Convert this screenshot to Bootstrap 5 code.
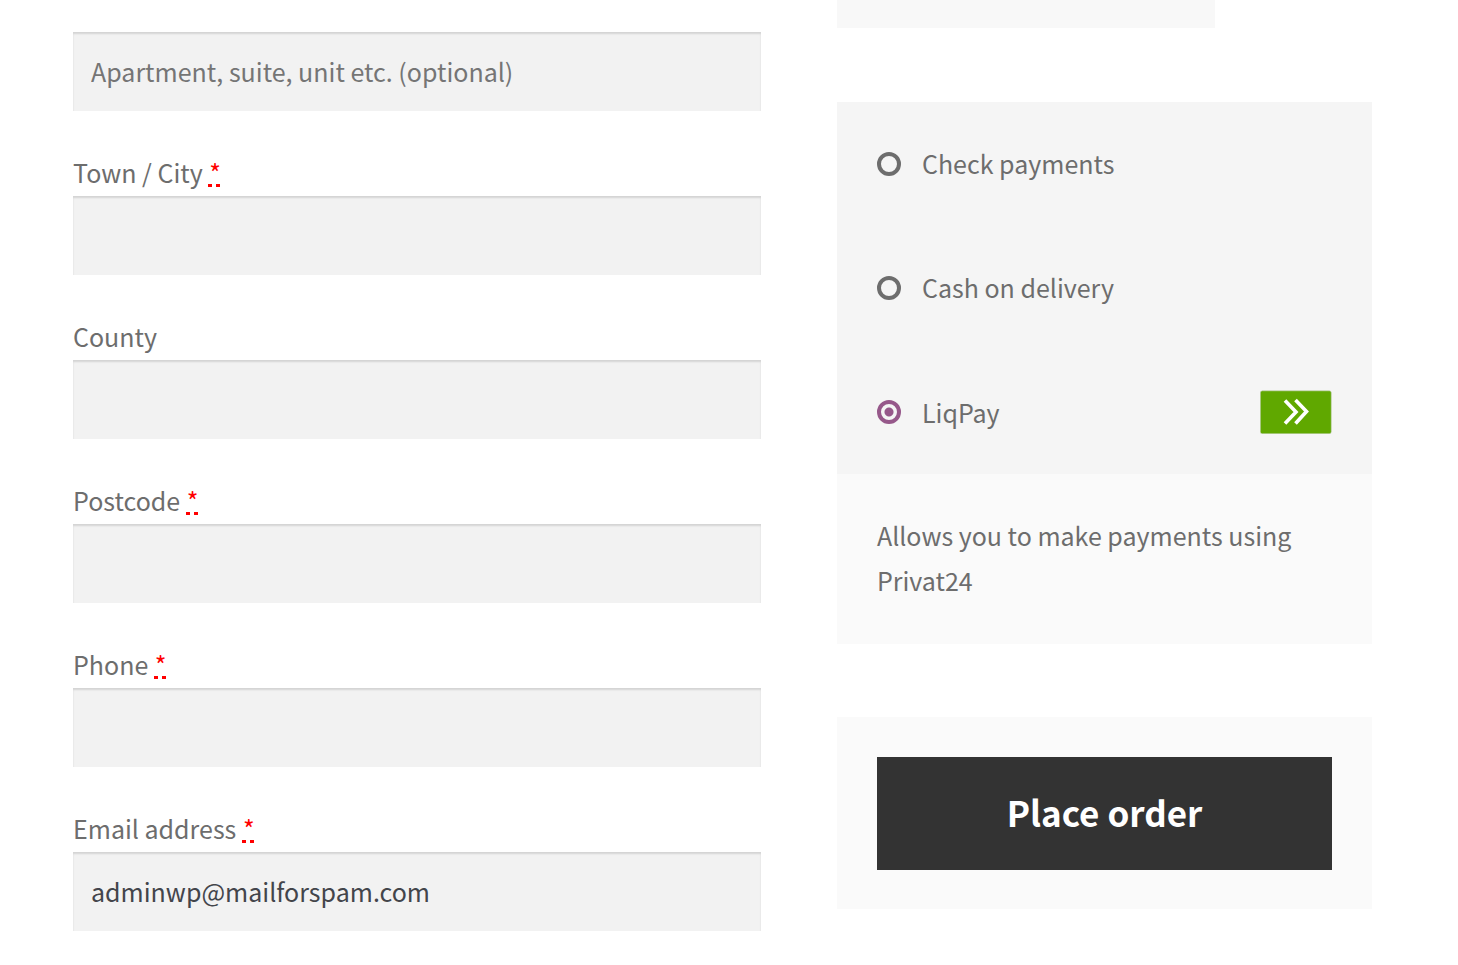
<!DOCTYPE html>
<html lang="en">
<head>
<meta charset="utf-8">
<meta name="viewport" content="width=device-width, initial-scale=1">
<title>Checkout</title>
<link href="https://cdn.jsdelivr.net/npm/bootstrap@5.3.0/dist/css/bootstrap.min.css" rel="stylesheet">
<style>
  body { font-family: "Noto Sans CJK SC", "Noto Sans", sans-serif; font-size: 25px; line-height: 45px; color: #6d6d6d; background: #fff; }
  .checkout { display: grid; grid-template-columns: 9fr 7fr; column-gap: 76px; padding: 0 86px 32px 73px; }
  .billing { display: flex; flex-direction: column; gap: 40px; padding-top: 32px; }
  .form-label { display: block; margin: 0; padding-bottom: 2px; line-height: 43px; }
  .form-control, .form-control:focus {
    height: 79px; padding: 0 18px 2px; border: 0; border-radius: 0; font-size: 25px; line-height: 45px;
    background: #f2f2f2; color: #43454b; box-shadow: inset 0 2px 2px rgba(0, 0, 0, .125);
  }
  .form-control::placeholder { color: #757575; }
  abbr.required {
    padding: 0 1px; color: #f00; text-decoration: none; cursor: help;
    background: repeating-linear-gradient(90deg, #f00 0 4px, transparent 4px 8px) 0 calc(100% - 3px) / 100% 3px no-repeat;
  }
  .review-cell { height: 28px; width: 378px; max-width: 100%; background: #f8f8f8; margin-bottom: 74px; }
  .method { min-height: 124px; padding: 0 40px; background: #f5f5f5; }
  .method label { padding-bottom: 2px; }
  .method .form-check-input { flex: none; width: 24px; height: 24px; margin: 0 21px 0 0; border: 4px solid #6d6d6d; background: none; box-shadow: none; }
  .method .form-check-input:checked { border-color: #96588a; background: radial-gradient(circle, #96588a 4px, transparent 5px); }
  .pay-logo { width: 72px; height: 44px; }
  .method .with-logo { padding: 0; }
  .method-note { padding: 39px 40px 41px; background: #fafafa; }
  .place { margin-top: 73px; padding: 40px 40px 39px; background: #fafafa; }
  .place .btn { display: block; height: 113px; padding: 0 12px 2px; border: 0; border-radius: 0; background: #333; color: #fff; font-size: 35px; font-weight: 700; }
  @media (max-width: 767px) { .checkout { grid-template-columns: 1fr; padding: 0 24px 32px; row-gap: 40px; } }
</style>
</head>
<body>
<form class="checkout">
  <section class="billing">
    <div><input class="form-control" type="text" placeholder="Apartment, suite, unit etc. (optional)" aria-label="Apartment, suite, unit etc. (optional)"></div>
    <div>
      <label class="form-label" for="city">Town / City <abbr class="required" title="required">*</abbr></label>
      <input class="form-control" id="city" type="text">
    </div>
    <div>
      <label class="form-label" for="county">County</label>
      <input class="form-control" id="county" type="text">
    </div>
    <div>
      <label class="form-label" for="postcode">Postcode <abbr class="required" title="required">*</abbr></label>
      <input class="form-control" id="postcode" type="text">
    </div>
    <div>
      <label class="form-label" for="phone">Phone <abbr class="required" title="required">*</abbr></label>
      <input class="form-control" id="phone" type="tel">
    </div>
    <div>
      <label class="form-label" for="email">Email address <abbr class="required" title="required">*</abbr></label>
      <input class="form-control" id="email" type="email" value="adminwp@mailforspam.com">
    </div>
  </section>

  <section>
    <div class="review-cell"></div>
    <div class="method d-flex align-items-center">
      <input class="form-check-input" type="radio" name="payment" id="check"><label for="check">Check payments</label>
    </div>
    <div class="method d-flex align-items-center">
      <input class="form-check-input" type="radio" name="payment" id="cash"><label for="cash">Cash on delivery</label>
    </div>
    <div class="method d-flex align-items-center">
      <input class="form-check-input" type="radio" name="payment" id="liqpay" checked>
      <label class="with-logo flex-grow-1 d-flex align-items-center justify-content-between" for="liqpay">LiqPay
        <svg class="pay-logo" viewBox="0 0 72 44" aria-hidden="true">
          <rect x=".3" y=".8" width="71" height="43" rx="2" fill="#60a800" stroke="#c9d3c0" stroke-width=".6"/>
          <path d="M25 10.500 36 22 25 33.500M35.500 10 46.500 21.500 35.500 33.500" fill="none" stroke="#fff" stroke-width="3.600"/>
        </svg>
      </label>
    </div>
    <div class="method-note">Allows you to make payments using Privat24</div>
    <div class="place"><button class="btn w-100" type="submit">Place order</button></div>
  </section>
</form>
<script src="https://cdn.jsdelivr.net/npm/bootstrap@5.3.0/dist/js/bootstrap.bundle.min.js"></script>
</body>
</html>
